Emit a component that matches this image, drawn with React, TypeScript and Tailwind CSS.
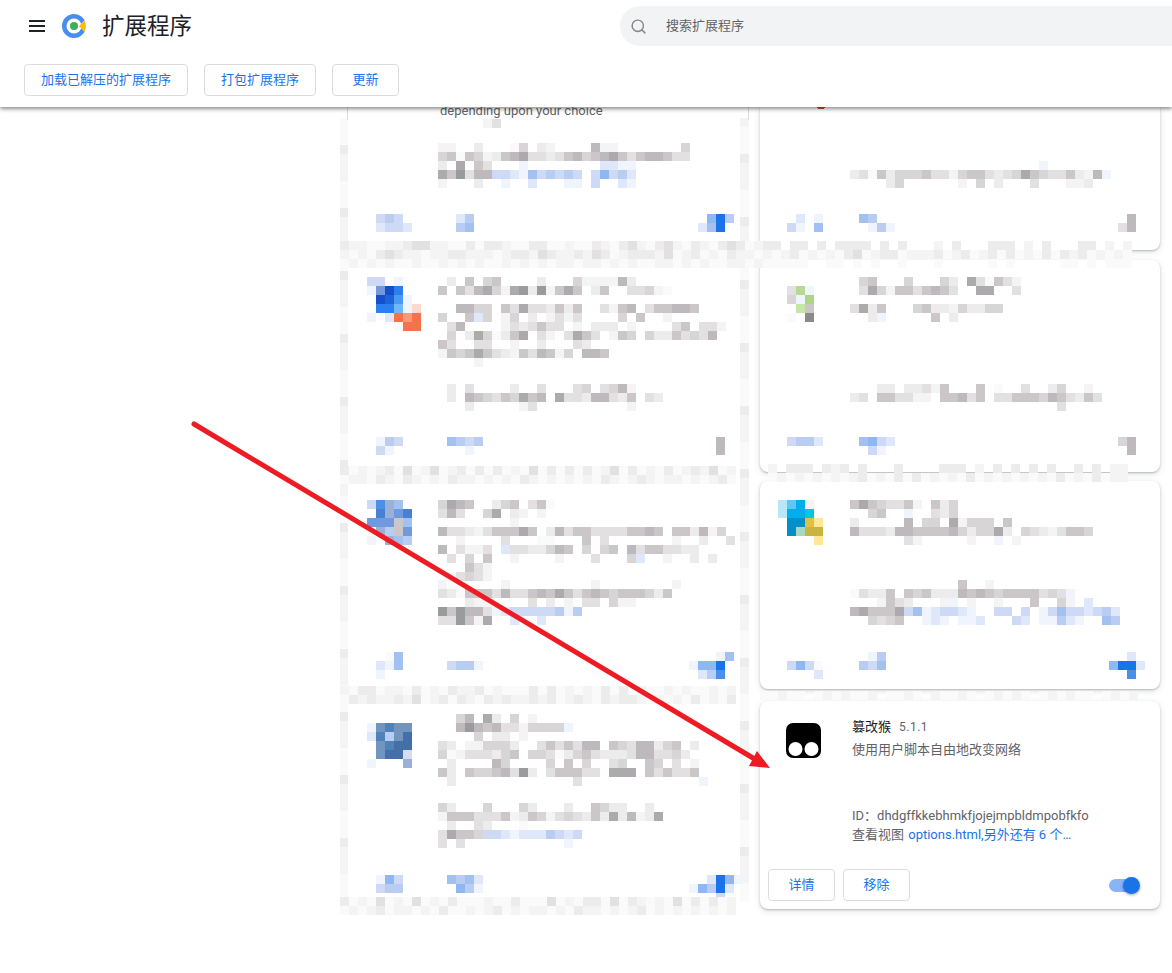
import { Search } from "lucide-react";

// colours of the blurred (mosaic) tiles
const TILE: Record<string, string> = {
  "0": "#fafafa", "1": "#f4f4f4", "2": "#ececec", "3": "#e2e0e0", "4": "#d8d5d6",
  "5": "#cbc7c9", "6": "#bdb9bc", "7": "#adaaad", "8": "#9a9b9c", "9": "#8a8a8a",
  a: "#f0f4fd", b: "#dfe8fb", c: "#cdd9f5", d: "#b9cdf2", e: "#a3c1f0", f: "#8fb8f2", g: "#4a90e8", h: "#1a73e8",
  i: "#1550c8", j: "#1d62d8", k: "#2a80f0", l: "#4a9af5", m: "#6fb8fb", n: "#7396dc", o: "#f4734a", p: "#f89a7a", q: "#fdd8cc",
  s: "#4a80d2", u: "#6f9ade", v: "#9ab0d8", w: "#7295c0", x: "#4e82b8", y: "#4470a8", z: "#d8dcec",
  A: "#b8d896", B: "#aed488", C: "#c6e6a6",
  D: "#b8e8f8", E: "#60c8f0", F: "#00aeef", G: "#00c8e0", H: "#0090c8", I: "#a8d8c0", J: "#e0c040", K: "#fde898", L: "#c8b440",
};

type Patch = { x: number; y: number; rows: string[] };

const patches: Patch[] = [
  // left column, first card
  { x: 483, y: 119, rows: ["13"] },
  {
    x: 438,
    y: 143,
    rows: [
      "11..2...04.21....611.......4",
      "4505412567332356456753566533",
      "2.7.53...a........bbaa",
      "758366ccbaecdcdc.cfcdb",
      "1...2..a..b...aa.c..ba",
    ],
  },
  { x: 376, y: 214, rows: ["cdc", "bccb"] },
  { x: 456, y: 214, rows: ["bd", "de"] },
  { x: 698, y: 214, rows: [".fhd", "beh."] },
  // left column, second card
  { x: 367, y: 277, rows: ["cc.a", "anik", ".ijla", ".kkmaq", "a.bopo", "...0oo"] },
  { x: 438, y: 277, rows: [".2.5.45....2...4111162", "5.53674178281575.25..33410"] },
  {
    x: 438,
    y: 304,
    rows: [
      "..6644.537332525..3156.355665",
      "4..5b4.14.2.1313....4.5..1",
      ".36....1323533.1.222.1....35.331",
      ".4.2740257.31.3753.154.42253436",
      "53..33..1..2...32",
      "154575321536514.665",
      "....1",
    ],
  },
  { x: 438, y: 384, rows: [".2.3....2..3...34.3461", ".2.654354756.733266325.32", "...2.....13..........1"] },
  { x: 376, y: 437, rows: ["adc", "ca"] },
  { x: 447, y: 437, rows: ["edcd", "..a"] },
  { x: 716, y: 437, rows: ["6", "6"] },
  // left column, third card
  { x: 367, y: 500, rows: ["cgve", ".svus", "uuu5e", ".vd5u", "a.ved"] },
  {
    x: 438,
    y: 500,
    rows: [
      "4765..245.350",
      "363..47.21.1",
      "........1",
      "63321355575.2635533335565.552614",
      "..1....3...00...5.3.......1..2..3",
      "6.3113.b3322465.4.45.63553322",
      ".3.4.5..1....1...3...4b..1..2.2",
      "...531",
      "..3431",
    ],
  },
  { x: 438, y: 580, rows: ["1......1.........1........1"] },
  { x: 438, y: 589, rows: ["32055536335657535654555425", "...211....3.2.1.33.411"] },
  { x: 438, y: 607, rows: ["858663abcccccdad", "338517..b..b"] },
  { x: 385, y: 652, rows: ["0e"] },
  { x: 376, y: 661, rows: ["bae", "a"] },
  { x: 447, y: 661, rows: ["cdda"] },
  { x: 689, y: 652, rows: ["...ae", "affh", ".bdg"] },
  // left column, fourth card
  { x: 367, y: 723, rows: ["awxww", "bxdwy", ".wxyy", ".wyyz", "a...v"] },
  {
    x: 438,
    y: 714,
    rows: [
      "..46.72.4.1",
      "..686563314444a",
      "....4.22.1",
      "32.114442..35353 66.543662 45.2".replace(/ /g, ""),
      "401333245.443024532223663342",
      ".2....64....4.5.4..34..54.3.1",
      "52.54456382.355533.777.535335",
      ".2.............3.............a",
    ],
  },
  {
    x: 438,
    y: 803,
    rows: [
      "42...4...42...2..5422..2",
      "15553335125413432527 26127".replace(" ", ""),
      ".2..32...0",
      "37554ccbabbbdcbc",
      "3.3...........a",
    ],
  },
  { x: 376, y: 875, rows: ["afc", "cdd"] },
  { x: 447, y: 875, rows: ["edeb", ".fda"] },
  { x: 689, y: 875, rows: ["..bhfa", "afdhb", "...c"] },
  // right column, first card
  { x: 850, y: 161, rows: [".....................a", "23052444533145532347543 35216a".replace(" ", ""), "....24......1.4.2...3...112"] },
  { x: 787, y: 214, rows: [".b.a", "ca.e"] },
  { x: 859, y: 214, rows: ["ed", ".ada"] },
  { x: 1118, y: 214, rows: [".6", "36"] },
  // right column, second card
  { x: 787, y: 286, rows: ["3Aa", "4aB", ".C5", "0.9"] },
  { x: 850, y: 277, rows: [".45...4...42.730531", ".37415535653..77..3"] },
  { x: 850, y: 304, rows: ["3725...4522142244", "..2a.....5.2"] },
  { x: 850, y: 384, rows: ["...22.22315...5.0..3..24..1", "23.553311.55635.3355546 53253".replace(" ", ""), ".......................3"] },
  { x: 787, y: 437, rows: ["cddb"] },
  { x: 859, y: 437, rows: ["efcb", ".ca"] },
  { x: 1118, y: 437, rows: ["46", ".6"] },
  // right column, third card
  { x: 778, y: 500, rows: ["DEF1", "DFFG", ".HHJK", ".HILL", "....K"] },
  { x: 850, y: 500, rows: ["57543351.524", "..45..a..324", "2.....6.44.71444.5", "633326655556424472.43213554", "......31.....1..a.1"] },
  {
    x: 850,
    y: 580,
    rows: [
      "............5..1",
      "03225.5452226565455553 43a".replace(" ", ""),
      "...1532...1a.1..1...5..41.b",
      "675557ceabccba..cc.c.aceccbcdb",
      "..4345..aba.aab...cb.aadba..ed",
    ],
  },
  { x: 787, y: 661, rows: ["cfc0", "...b"] },
  { x: 868, y: 652, rows: ["ad"] },
  { x: 859, y: 661, rows: ["dce"] },
  { x: 1109, y: 652, rows: ["..b", "fhhb", "..g"] },
  // faint gutters between the left cards
  { x: 340, y: 241, rows: ["211001123311002022100220010021023102310210232012", "101023211011221110122132112132012221301201021101"] },
  { x: 340, y: 259, rows: ["010101001001010100101010110110101001101010011010"] },
  { x: 340, y: 466, rows: ["20101203013012020201030202020130201020121301", "01102102101021101010210101010210121011010120"] },
  { x: 340, y: 686, rows: ["10220110201021120100020201010202010010100101", "02121121301202102121121201210212210101020102"] },
  { x: 340, y: 897, rows: ["20103010301020001002000301022030210103020201", "01012011010200101201011010211010120101010101"] },
  // the same gutters where they run on over the right cards
  { x: 772, y: 241, rows: ["2.22.2.2222.2.2...1.2...222.1.2...22.1.1.", "0120101023012201112012012020102021201010"] },
  { x: 772, y: 259, rows: ["0000..00.0.0..0...0.....0.0.....00.0.000"] },
  { x: 768, y: 464, rows: ["1.222.212.2...2....222.1.2.2.2.2..2.2.11", "0101010101201020201010201010101020102011"] },
  { x: 760, y: 691, rows: ["00100.0101001.0010.10010.01010.010100.0101"] },
];

// the pale columns at the two sides of the blurred column
const edge = (seed: number) =>
  Array.from({ length: 87 }, (_, i) => ["1", "0", "2", "1", "0", "1", "0"][(i * 5 + seed) % 7]);

const edgeTiles = [
  { x: 340, cells: edge(1) },
  { x: 740, cells: edge(3) },
];

function BlurLayer() {
  return (
    <svg className="pointer-events-none absolute left-0 top-0 z-[1]" width={1172} height={973} shapeRendering="crispEdges">
      {edgeTiles.map((col) =>
        col.cells.map((c, i) => <rect key={`${col.x}-${i}`} x={col.x} y={118 + i * 9} width={col.x === 340 ? 8 : 9} height={9} fill={TILE[c]} />),
      )}
      {patches.map((p, pi) =>
        p.rows.map((row, ri) =>
          row.split("").map((c, ci) =>
            TILE[c] ? (
              <rect key={`${pi}-${ri}-${ci}`} x={p.x + ci * 9} y={p.y + ri * 9} width={9} height={9} fill={TILE[c]} />
            ) : null,
          ),
        ),
      )}
      <rect x={347} y={107} width={1} height={13} fill="#dcdcdc" />
      <rect x={748} y={107} width={1} height={13} fill="#dcdcdc" />
      <ellipse cx={821} cy={107} rx={4} ry={2.5} fill="#c8502a" />
    </svg>
  );
}

function Arrow() {
  return (
    <svg className="pointer-events-none absolute left-0 top-0 z-[2]" width={1172} height={973}>
      <line x1={194} y1={424} x2={758} y2={761} stroke="#ed1c24" strokeWidth={5} strokeLinecap="round" />
      <polygon points="770,768 757,751 749,766" fill="#ed1c24" />
    </svg>
  );
}

function Logo() {
  return (
    <svg width={24} height={24} viewBox="0 0 24 24">
      <circle cx={12} cy={12} r={12} fill="#4a8df0" />
      <circle cx={12} cy={12} r={7.5} fill="#fff" />
      <circle cx={12} cy={12} r={4} fill="#3fae5a" />
      <path d="M17 12 L24 5 L24 19 Z" fill="#fff" />
      <path d="M17 12 L22.5 6.5 A12 12 0 0 1 22.5 17.5 Z" fill="#fbbc04" />
    </svg>
  );
}

function MenuIcon() {
  return (
    <svg className="ml-[29px]" width={16} height={12} viewBox="0 0 16 12" fill="#202124">
      <rect width={16} height={2} />
      <rect y={5} width={16} height={2} />
      <rect y={10} width={16} height={2} />
    </svg>
  );
}

function OutlineButton({ label, className }: { label: string; className: string }) {
  return (
    <button className={`flex h-8 items-center justify-center rounded border border-[#dadce0] bg-white text-[13px] text-[#1a73e8] ${className}`}>
      {label}
    </button>
  );
}

function Toolbar() {
  return (
    <header className="relative z-10 h-[107px] shrink-0 bg-white shadow-[0_2px_4px_rgba(0,0,0,0.45)]">
      <div className="flex h-[52px] items-center">
        <MenuIcon />
        <div className="ml-[17px]">
          <Logo />
        </div>
        <h1 className="ml-4 translate-y-[1px] text-[22.5px] font-normal text-[#202124]">扩展程序</h1>
        <div className="ml-[428px] flex h-10 min-w-0 flex-1 items-center rounded-l-full bg-[#f1f3f4] pl-[10px]">
          <Search className="text-[#80868b]" size={17} />
          <span className="ml-[19px] text-[13px] text-[#5f6368]">搜索扩展程序</span>
        </div>
      </div>
      <div className="mt-3 flex gap-4 pl-6">
        <OutlineButton label="加载已解压的扩展程序" className="w-[164px]" />
        <OutlineButton label="打包扩展程序" className="w-[112px]" />
        <OutlineButton label="更新" className="w-[67px]" />
      </div>
    </header>
  );
}

function TamperIcon() {
  return (
    <svg width={36} height={36} viewBox="0 0 36 36">
      <rect x={0} y={0} width={35} height={35} rx={7} fill="#000" />
      <circle cx={9.5} cy={26} r={7} fill="#fff" />
      <circle cx={25.5} cy={26} r={7} fill="#fff" />
    </svg>
  );
}

function TamperCard() {
  return (
    <article className="flex h-[208px] flex-col rounded-lg bg-white shadow-[0_1px_2px_rgba(60,64,67,0.3),0_2px_6px_rgba(60,64,67,0.15)]">
      <div className="flex flex-1 pl-[26px] pr-4 pt-[22px]">
        <div className="w-[66px] shrink-0">
          <TamperIcon />
        </div>
        <div className="flex flex-1 flex-col text-[13px] leading-[18px] text-[#5f6368]">
          <div className="-mt-[5px] flex items-center gap-2">
            <span className="text-[#202124]">篡改猴</span>
            <span className="text-xs tracking-[0.5px]">5.1.1</span>
          </div>
          <p className="mt-[5px]">使用用户脚本自由地改变网络</p>
          <p className="mt-[48px]">ID：dhdgffkkebhmkfjojejmpbldmpobfkfo</p>
          <p className="mt-[1px]">
            查看视图 <span className="ml-[1px] text-[#1a73e8]">options.html,另外还有 6 个…</span>
          </p>
        </div>
      </div>
      <div className="flex items-center gap-2 pb-2 pl-2 pr-[28px]">
        <OutlineButton label="详情" className="w-[67px]" />
        <OutlineButton label="移除" className="w-[67px]" />
        <div className="relative ml-auto h-[13px] w-[23px] rounded-full bg-[#8ab4f8]">
          <div className="absolute -right-[8px] -top-[2px] h-[17px] w-[17px] rounded-full bg-[#1a73e8] shadow-[0_1px_3px_rgba(0,0,0,0.4)]" />
        </div>
      </div>
    </article>
  );
}

const cardShadow = "rounded-lg bg-white shadow-[0_1px_2px_rgba(60,64,67,0.3),0_2px_6px_rgba(60,64,67,0.15)]";

export default function App() {
  return (
    <div className="relative flex h-[973px] w-[1172px] flex-col overflow-hidden bg-white font-['Roboto','Noto_Sans_CJK_SC',sans-serif]">
      <Toolbar />
      <main className="grid grid-cols-[400px_400px] gap-x-3 pl-[348px]">
        <div>
          <p className="-mt-[4px] pl-[92px] text-[13px] leading-4 text-[#5f6368]">depending upon your choice</p>
        </div>
        <div className="flex flex-col">
          <div className={`h-[143px] rounded-t-none ${cardShadow}`} />
          <div className={`mt-[10px] h-[212px] ${cardShadow}`} />
          <div className={`mt-[9px] h-[208px] ${cardShadow}`} />
          <div className="mt-3">
            <TamperCard />
          </div>
        </div>
      </main>
      <BlurLayer />
      <Arrow />
    </div>
  );
}
